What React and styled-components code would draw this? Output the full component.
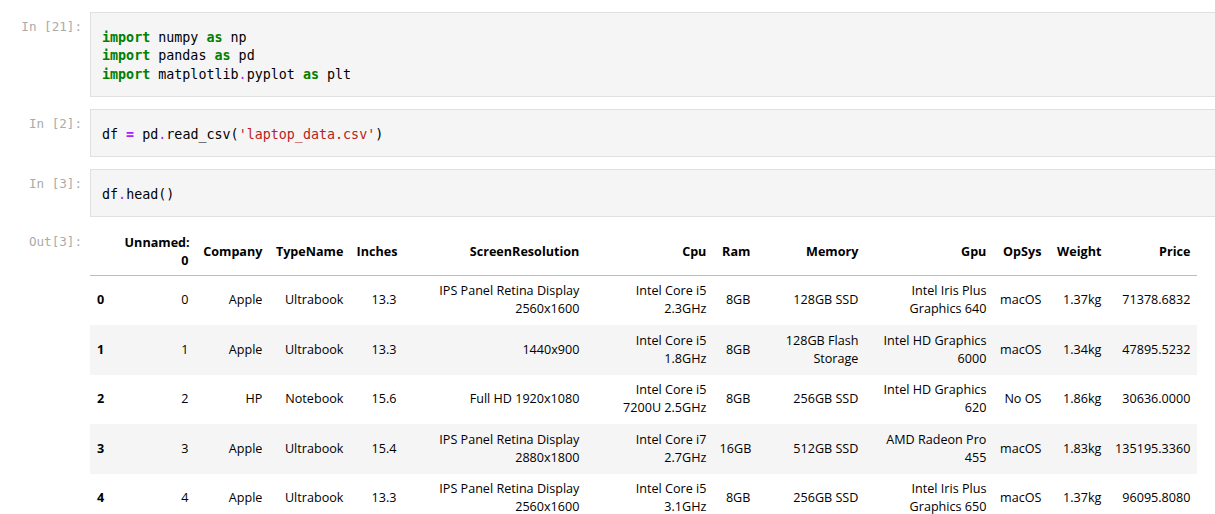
import React from "react";
import styled, { createGlobalStyle } from "styled-components";

const Global = createGlobalStyle`
  html, body { margin: 0; padding: 0; background: #fff; overflow: hidden; }
  body { font-family: "Open Sans", "Noto Sans", sans-serif; }
`;

const Notebook = styled.div`
  display: flex;
  flex-direction: column;
  gap: 12px;
  padding-top: 12px;
  width: 1215px;
`;

const CellRow = styled.div`
  display: flex;
  align-items: flex-start;
  margin-top: ${(p) => p.$offset || 0}px;
`;

const Prompt = styled.div`
  flex: 0 0 82px;
  margin-right: 8px;
  text-align: right;
  font-family: "DejaVu Sans Mono", "Liberation Mono", monospace;
  font-size: 12.6px;
  line-height: 18px;
  color: #ababab;
  padding-top: ${(p) => p.$top}px;
  white-space: pre;
`;

const InputArea = styled.div`
  flex: 1;
  background: #f5f5f5;
  border: 1px solid #e0e0e0;
  border-right: none;
  padding: 15.5px 0 12px 11px;
`;

const CodeLine = styled.div`
  font-family: "DejaVu Sans Mono", "Liberation Mono", monospace;
  font-size: 13.35px;
  line-height: 18.5px;
  color: #000;
  white-space: pre;
`;

const Kw = styled.span`
  color: #008000;
  font-weight: bold;
`;
const Op = styled.span`
  color: #aa22ff;
  font-weight: ${(p) => (p.$bold ? "bold" : "normal")};
`;
const Str = styled.span`
  color: #ba2121;
`;

const Output = styled.div`
  flex: 0 0 auto;
`;

const Table = styled.table`
  border-collapse: collapse;
  table-layout: fixed;
  width: 1107px;
  font-size: 12.6px;
  line-height: 18px;
  color: #000;
`;

const Head = styled.thead`
  border-bottom: 1px solid #bdbdbd;
`;

const HeadCell = styled.th`
  font-weight: 700;
  text-align: right;
  vertical-align: middle;
  padding: 6.75px 6.6px 4.75px;
  white-space: nowrap;
`;

const Row = styled.tr`
  background: ${(p) => (p.$striped ? "#f5f5f5" : "#fff")};
`;

const IndexCell = styled.th`
  font-weight: 700;
  text-align: left;
  vertical-align: middle;
  padding: 6.75px 7px;
  white-space: nowrap;
`;

const Cell = styled.td`
  text-align: right;
  vertical-align: middle;
  padding: 6.75px 6.6px;
  white-space: nowrap;
`;

const widths = [28, 77, 74, 81, 53, 183, 127, 44, 108, 128, 55, 60, 89];
const headers = [
  "",
  ["Unnamed:", "0"],
  "Company",
  "TypeName",
  "Inches",
  "ScreenResolution",
  "Cpu",
  "Ram",
  "Memory",
  "Gpu",
  "OpSys",
  "Weight",
  "Price",
];

const rows = [
  ["0", "0", "Apple", "Ultrabook", "13.3", ["IPS Panel Retina Display", "2560x1600"], ["Intel Core i5", "2.3GHz"], "8GB", "128GB SSD", ["Intel Iris Plus", "Graphics 640"], "macOS", "1.37kg", "71378.6832"],
  ["1", "1", "Apple", "Ultrabook", "13.3", "1440x900", ["Intel Core i5", "1.8GHz"], "8GB", ["128GB Flash", "Storage"], ["Intel HD Graphics", "6000"], "macOS", "1.34kg", "47895.5232"],
  ["2", "2", "HP", "Notebook", "15.6", "Full HD 1920x1080", ["Intel Core i5", "7200U 2.5GHz"], "8GB", "256GB SSD", ["Intel HD Graphics", "620"], "No OS", "1.86kg", "30636.0000"],
  ["3", "3", "Apple", "Ultrabook", "15.4", ["IPS Panel Retina Display", "2880x1800"], ["Intel Core i7", "2.7GHz"], "16GB", "512GB SSD", ["AMD Radeon Pro", "455"], "macOS", "1.83kg", "135195.3360"],
  ["4", "4", "Apple", "Ultrabook", "13.3", ["IPS Panel Retina Display", "2560x1600"], ["Intel Core i5", "3.1GHz"], "8GB", "256GB SSD", ["Intel Iris Plus", "Graphics 650"], "macOS", "1.37kg", "96095.8080"],
];

const Lines = ({ v }) =>
  Array.isArray(v) ? (
    <>
      {v[0]}
      <br />
      {v[1]}
    </>
  ) : (
    v
  );

export default function App() {
  return (
    <>
      <Global />
      <Notebook>
        <CellRow>
          <Prompt $top={5.5}>In [21]:</Prompt>
          <InputArea>
            <CodeLine>
              <Kw>import</Kw> numpy <Kw>as</Kw> np
            </CodeLine>
            <CodeLine>
              <Kw>import</Kw> pandas <Kw>as</Kw> pd
            </CodeLine>
            <CodeLine>
              <Kw>import</Kw> matplotlib<Op>.</Op>pyplot <Kw>as</Kw> plt
            </CodeLine>
          </InputArea>
        </CellRow>
        <CellRow>
          <Prompt $top={5.5}>In [2]:</Prompt>
          <InputArea>
            <CodeLine>
              df <Op $bold>=</Op> pd<Op>.</Op>read_csv(<Str>'laptop_data.csv'</Str>)
            </CodeLine>
          </InputArea>
        </CellRow>
        <CellRow>
          <Prompt $top={5.5}>In [3]:</Prompt>
          <InputArea>
            <CodeLine>
              df<Op>.</Op>head()
            </CodeLine>
          </InputArea>
        </CellRow>
        <CellRow $offset={-2}>
          <Prompt $top={6}>Out[3]:</Prompt>
          <Output>
            <Table>
              <colgroup>
                {widths.map((w, i) => (
                  <col key={i} style={{ width: w }} />
                ))}
              </colgroup>
              <Head>
                <tr>
                  {headers.map((h, i) => (
                    <HeadCell key={i}>
                      <Lines v={h} />
                    </HeadCell>
                  ))}
                </tr>
              </Head>
              <tbody>
                {rows.map((r, ri) => (
                  <Row key={ri} $striped={ri % 2 === 1}>
                    <IndexCell>{r[0]}</IndexCell>
                    {r.slice(1).map((c, ci) => (
                      <Cell key={ci}>
                        <Lines v={c} />
                      </Cell>
                    ))}
                  </Row>
                ))}
              </tbody>
            </Table>
          </Output>
        </CellRow>
      </Notebook>
    </>
  );
}
